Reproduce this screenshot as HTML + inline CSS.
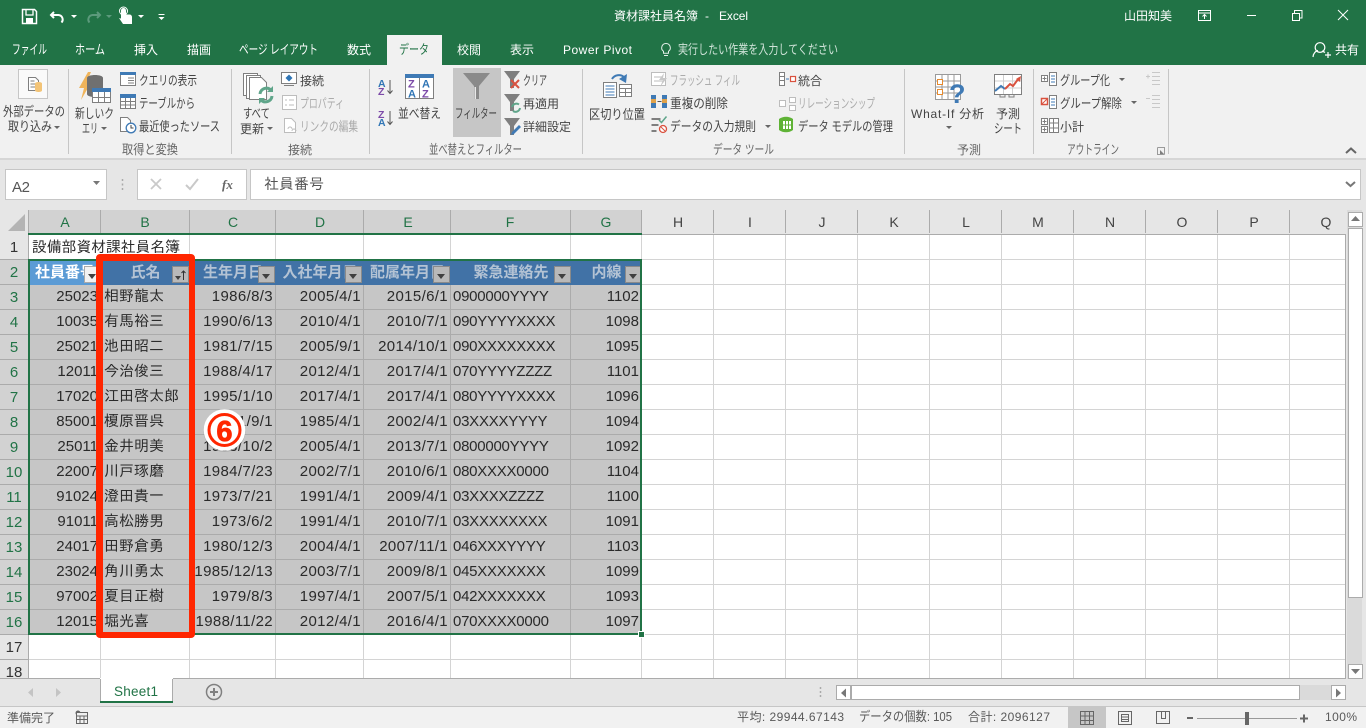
<!DOCTYPE html>
<html lang="ja"><head><meta charset="utf-8"><title>資材課社員名簿 - Excel</title>
<style>
html,body{margin:0;padding:0;width:1366px;height:728px;overflow:hidden;background:#e6e6e6}
body{position:relative;font-family:"Liberation Sans","Noto Sans CJK JP",sans-serif}
svg{position:absolute;left:0;top:0}
svg text{font-family:"Liberation Sans","Noto Sans CJK JP",sans-serif;font-size:12px;fill:#444}
svg text[lengthAdjust="spacingAndGlyphs"]{font-size:13px}
.w text{fill:#fff}
.g text{fill:#ababab}
.l text{fill:#666}
.s text{fill:#595959}
.ch text{font-size:14px;text-anchor:middle;fill:#217346}
.ch .n{fill:#444}
.rh text{font-size:15px;text-anchor:middle;fill:#217346}
.rh .n{fill:#333}
#sel{position:absolute;left:30px;top:261px;width:610px;height:372px;overflow:hidden;background:#c6c6c6}
#sel table{position:absolute;left:-1px;top:-1px;border-collapse:separate;border-spacing:0;table-layout:fixed;width:613px;font-family:"Liberation Sans","IPAGothic","Noto Sans CJK JP",sans-serif}
#sel td{box-sizing:border-box;height:25px;padding:0 2px;font-size:15px;line-height:24px;color:#2a2a2a;white-space:nowrap;overflow:hidden;text-align:right;border-right:1px solid #ababab;border-bottom:1px solid #ababab;background:#c6c6c6}
#sel td.j{text-align:left;padding-left:3px}
#sel td.d{letter-spacing:.35px}
#sel td.f{text-align:left;padding-left:2px;letter-spacing:-.25px}
#sel tr.h td{background:#4172a6;color:#b4c3d4;font-weight:bold;text-align:center;border:0;padding:0;overflow:hidden;font-family:"Liberation Sans","Noto Sans CJK JP",sans-serif}
#sel tr.h td.a{background:#5b9bd5;color:#fff}
.btn{position:absolute;top:266px;width:17px;height:17px;box-sizing:border-box;background:#b9b9b9;border:1px solid #8a8a8a}
.btn:after{content:"";position:absolute;left:3px;top:7px;border:4.5px solid transparent;border-top:5px solid #404040;border-bottom:0}
.btn.so:after{left:2px;top:9px;border-width:3.5px;border-top-width:4px;border-bottom:0}
#box{position:absolute;left:28px;top:259px;width:614px;height:376px;box-sizing:border-box;border:2px solid #217346;pointer-events:none}
#hd{position:absolute;left:639px;top:632px;width:5px;height:5px;background:#217346;outline:1px solid #fff}
#red{position:absolute;left:96px;top:254px;width:99px;height:384px;box-sizing:border-box;border:solid #ff2600;border-width:7px 6px 6px 7px;border-radius:4px}
</style></head><body>
<svg width="1366" height="728" viewBox="0 0 1366 728">
<!-- backgrounds -->
<g shape-rendering="crispEdges">
<rect width="1366" height="65" fill="#217346"/>
<rect x="387" y="35" width="55" height="30" fill="#f1f1f1"/>
<rect y="65" width="1366" height="93" fill="#f1f1f1"/>
<rect y="158" width="1366" height="2" fill="#d6d6d6"/>
<rect y="160" width="1366" height="50" fill="#e6e6e6"/>
<rect x="5.5" y="169.5" width="101" height="30" fill="#fff" stroke="#c6c6c6"/>
<rect x="137.5" y="169.5" width="109" height="30" fill="#fff" stroke="#c6c6c6"/>
<rect x="250.5" y="169.5" width="1110" height="30" fill="#fff" stroke="#c6c6c6"/>
<rect x="453" y="68" width="48" height="69" fill="#c6c6c6"/>
<!-- ribbon separators -->
<g fill="#c6c6c6"><rect x="68" y="69" width="1" height="85"/><rect x="231" y="69" width="1" height="85"/><rect x="369" y="69" width="1" height="85"/><rect x="582" y="69" width="1" height="85"/><rect x="904" y="69" width="1" height="85"/><rect x="1033" y="69" width="1" height="85"/><rect x="1168" y="69" width="1" height="85"/></g>
<!-- grid -->
<rect x="29" y="235" width="1316" height="443" fill="#fff"/>
<rect x="0" y="210" width="28" height="24" fill="#e6e6e6"/>
<rect x="29" y="210" width="613" height="23" fill="#d2d2d2"/>
<rect x="0" y="235" width="28" height="25" fill="#e6e6e6"/>
<rect x="0" y="260" width="28" height="375" fill="#d2d2d2"/>
<rect x="0" y="635" width="28" height="44" fill="#e6e6e6"/>
<g fill="#d4d4d4">
<rect x="29" y="259" width="1316" height="1"/><rect x="29" y="284" width="1316" height="1"/><rect x="29" y="309" width="1316" height="1"/><rect x="29" y="334" width="1316" height="1"/><rect x="29" y="359" width="1316" height="1"/><rect x="29" y="384" width="1316" height="1"/><rect x="29" y="409" width="1316" height="1"/><rect x="29" y="434" width="1316" height="1"/><rect x="29" y="459" width="1316" height="1"/><rect x="29" y="484" width="1316" height="1"/><rect x="29" y="509" width="1316" height="1"/><rect x="29" y="534" width="1316" height="1"/><rect x="29" y="559" width="1316" height="1"/><rect x="29" y="584" width="1316" height="1"/><rect x="29" y="609" width="1316" height="1"/><rect x="29" y="634" width="1316" height="1"/><rect x="29" y="659" width="1316" height="1"/>
<rect x="189" y="235" width="1" height="443"/><rect x="275" y="235" width="1" height="443"/><rect x="363" y="235" width="1" height="443"/><rect x="450" y="235" width="1" height="443"/><rect x="570" y="235" width="1" height="443"/><rect x="641" y="235" width="1" height="443"/><rect x="713" y="235" width="1" height="443"/><rect x="785" y="235" width="1" height="443"/><rect x="857" y="235" width="1" height="443"/><rect x="929" y="235" width="1" height="443"/><rect x="1001" y="235" width="1" height="443"/><rect x="1073" y="235" width="1" height="443"/><rect x="1145" y="235" width="1" height="443"/><rect x="1217" y="235" width="1" height="443"/><rect x="1289" y="235" width="1" height="443"/>
<rect x="100" y="635" width="1" height="43"/>
</g>
<g fill="#ababab">
<rect x="100" y="210" width="1" height="23"/><rect x="189" y="210" width="1" height="23"/><rect x="275" y="210" width="1" height="23"/><rect x="363" y="210" width="1" height="23"/><rect x="450" y="210" width="1" height="23"/><rect x="570" y="210" width="1" height="23"/><rect x="641" y="210" width="1" height="23"/><rect x="713" y="210" width="1" height="23"/><rect x="785" y="210" width="1" height="23"/><rect x="857" y="210" width="1" height="23"/><rect x="929" y="210" width="1" height="23"/><rect x="1001" y="210" width="1" height="23"/><rect x="1073" y="210" width="1" height="23"/><rect x="1145" y="210" width="1" height="23"/><rect x="1217" y="210" width="1" height="23"/><rect x="1289" y="210" width="1" height="23"/>
<rect x="28" y="210" width="1" height="469"/><rect x="642" y="234" width="703" height="1"/><rect x="1345" y="234" width="1" height="445"/>
<rect x="0" y="259" width="28" height="1"/><rect x="0" y="284" width="28" height="1"/><rect x="0" y="309" width="28" height="1"/><rect x="0" y="334" width="28" height="1"/><rect x="0" y="359" width="28" height="1"/><rect x="0" y="384" width="28" height="1"/><rect x="0" y="409" width="28" height="1"/><rect x="0" y="434" width="28" height="1"/><rect x="0" y="459" width="28" height="1"/><rect x="0" y="484" width="28" height="1"/><rect x="0" y="509" width="28" height="1"/><rect x="0" y="534" width="28" height="1"/><rect x="0" y="559" width="28" height="1"/><rect x="0" y="584" width="28" height="1"/><rect x="0" y="609" width="28" height="1"/><rect x="0" y="634" width="28" height="1"/><rect x="0" y="659" width="28" height="1"/>
<rect x="0" y="678" width="1346" height="1"/>
</g>
<rect x="28" y="233" width="614" height="2" fill="#217346"/>
<rect x="28" y="260" width="1" height="375" fill="#217346"/>
<!-- tab bar & status -->
<rect x="0" y="679" width="1366" height="27" fill="#e6e6e6"/>
<rect x="0" y="706" width="1366" height="1" fill="#c6c6c6"/>
<rect x="0" y="707" width="1366" height="21" fill="#f1f1f1"/>
<rect x="100" y="679" width="73" height="24" fill="#fff"/>
<rect x="100" y="678" width="1" height="25" fill="#ababab"/><rect x="172" y="678" width="1" height="25" fill="#ababab"/>
<rect x="100" y="678" width="73" height="1" fill="#fff"/>
<rect x="100" y="701" width="73" height="2" fill="#217346"/>
<rect x="1068" y="707" width="38" height="21" fill="#c6c6c6"/>
<!-- scrollbars -->
<rect x="1347" y="210" width="15" height="469" fill="#dadada"/>
<rect x="1348.5" y="212.5" width="14" height="14" fill="#fff" stroke="#ababab"/>
<rect x="1348.5" y="228.5" width="14" height="369" fill="#fff" stroke="#ababab"/>
<rect x="1348.5" y="664.5" width="14" height="14" fill="#fff" stroke="#ababab"/>
<rect x="836" y="685" width="510" height="15" fill="#dadada"/>
<rect x="836.5" y="685.5" width="14" height="14" fill="#fff" stroke="#ababab"/>
<rect x="851.5" y="685.5" width="448" height="14" fill="#fff" stroke="#ababab"/>
<rect x="1331.5" y="685.5" width="14" height="14" fill="#fff" stroke="#ababab"/>
</g>
<g fill="#777">
<path d="M1355.5 216l4.500 5h-9z"/><path d="M1355.5 674l-4.500-5h9z"/><path d="M841 693l5-4.500v9z"/><path d="M1341 693l-5-4.500v9z"/>
</g>

<!-- Title bar text -->
<g class="w">
<text x="614" y="20" textLength="84" lengthAdjust="spacing">資材課社員名簿</text>
<text x="705" y="20">-</text>
<text x="719" y="20" textLength="29">Excel</text>
<text x="1124" y="20" textLength="48">山田知美</text>
<text x="12" y="54" textLength="35" lengthAdjust="spacingAndGlyphs">ファイル</text>
<text x="75" y="54" textLength="30" lengthAdjust="spacingAndGlyphs">ホーム</text>
<text x="134" y="54">挿入</text>
<text x="187" y="54">描画</text>
<text x="239" y="54" textLength="79" lengthAdjust="spacingAndGlyphs">ページ レイアウト</text>
<text x="347" y="54">数式</text>
<text x="457" y="54">校閲</text>
<text x="510" y="54">表示</text>
<text x="563" y="54" textLength="69">Power Pivot</text>
<text x="678" y="54" textLength="160" lengthAdjust="spacingAndGlyphs" style="fill:#cfe3d8">実行したい作業を入力してください</text>
<text x="1335" y="54">共有</text>
</g>
<text x="399" y="54" textLength="30" lengthAdjust="spacingAndGlyphs" style="fill:#217346">データ</text>

<!-- QAT icons -->
<g fill="none" stroke="#fff">
<path d="M22.500 9.500h12l2 2v12h-14z" stroke-width="1.500"/>
<path d="M26 10v5h7v-5" stroke-width="1.300"/>
<rect x="26" y="18" width="7" height="5" fill="#fff" stroke="none"/>
<path d="M54 12l-3 3 3 3M51.500 15h7a4.500 4.500 0 0 1 3 7.500" stroke-width="2"/>
<path d="M97 12l3 3-3 3M99.500 15h-7a4.500 4.500 0 0 0-3 7.500" stroke-width="2" stroke="#5c9a7c"/>
<path d="M1198.500 10.500h12v10h-12zM1198.500 13h12M1204.500 19v-4M1202.500 16.500l2-2 2 2" stroke-width="1"/>
<path d="M1247 15.500h9" stroke-width="1"/>
<path d="M1292.500 13.500h7v7h-7zM1294.500 13v-2.500h7.500v7.500h-2.500" stroke-width="1"/>
<path d="M1338 10l10 10M1348 10l-10 10" stroke-width="1"/>
<circle cx="1320" cy="47.500" r="4.800" stroke-width="1.200"/><path d="M1313 57c.5-4.500 3-6 5-6.500M1322 51c1 .3 2 .8 3 1.500M1325 55h6M1328 52v6" stroke-width="1.200"/>
<path d="M666 43.500a4.300 4.300 0 0 1 2.500 7.800v2h-5v-2a4.300 4.300 0 0 1 2.500-7.800zM664 55.500h4" stroke-width="1" stroke="#e3efe8"/>
</g>
<g fill="#fff">
<path d="M121 10.500a2.500 2.500 0 0 1 5 0v4h3.500a2.500 2.500 0 0 1 2.500 2.500v7h-9l-4-6 2 .5z"/>
<path d="M71 15h6l-3 3zM138 15h6l-3 3zM158.500 14h6v1h-6zM158.500 17h6l-3 3z"/>
</g>
<path d="M106 15h6l-3 3z" fill="#5c9a7c"/>
<circle cx="123.500" cy="11" r="4" fill="none" stroke="#fff" stroke-width="1"/>

<!-- Ribbon text -->
<g>
<text x="3" y="116" textLength="62" lengthAdjust="spacingAndGlyphs">外部データの</text>
<text x="8" y="131" textLength="44" lengthAdjust="spacingAndGlyphs">取り込み</text>
<text x="75" y="118" textLength="39" lengthAdjust="spacingAndGlyphs">新しいク</text>
<text x="82" y="133" textLength="16" lengthAdjust="spacingAndGlyphs">エリ</text>
<text x="139" y="85" textLength="58" lengthAdjust="spacingAndGlyphs">クエリの表示</text>
<text x="139" y="108" textLength="56" lengthAdjust="spacingAndGlyphs">テーブルから</text>
<text x="139" y="131" textLength="81" lengthAdjust="spacingAndGlyphs">最近使ったソース</text>
<text x="243" y="118" textLength="27" lengthAdjust="spacingAndGlyphs">すべて</text>
<text x="240" y="133" textLength="24">更新</text>
<text x="300" y="85">接続</text>
<text x="398" y="118" textLength="43" lengthAdjust="spacingAndGlyphs">並べ替え</text>
<text x="455" y="118" textLength="42" lengthAdjust="spacingAndGlyphs">フィルター</text>
<text x="523" y="85" textLength="24" lengthAdjust="spacingAndGlyphs">クリア</text>
<text x="523" y="108" textLength="36">再適用</text>
<text x="523" y="131" textLength="48">詳細設定</text>
<text x="589" y="119" textLength="56" lengthAdjust="spacingAndGlyphs">区切り位置</text>
<text x="670" y="108" textLength="58" lengthAdjust="spacingAndGlyphs">重複の削除</text>
<text x="670" y="131" textLength="86" lengthAdjust="spacingAndGlyphs">データの入力規則</text>
<text x="798" y="85">統合</text>
<text x="798" y="131" textLength="95" lengthAdjust="spacingAndGlyphs">データ モデルの管理</text>
<text x="911" y="118" textLength="73">What-If 分析</text>
<text x="996" y="118">予測</text>
<text x="994" y="133" textLength="28" lengthAdjust="spacingAndGlyphs">シート</text>
<text x="1060" y="85" textLength="50" lengthAdjust="spacingAndGlyphs">グループ化</text>
<text x="1060" y="108" textLength="62" lengthAdjust="spacingAndGlyphs">グループ解除</text>
<text x="1060" y="131">小計</text>
</g>
<g class="g">
<text x="300" y="108" textLength="44" lengthAdjust="spacingAndGlyphs">プロパティ</text>
<text x="300" y="131" textLength="58" lengthAdjust="spacingAndGlyphs">リンクの編集</text>
<text x="670" y="85" textLength="70" lengthAdjust="spacingAndGlyphs">フラッシュ フィル</text>
<text x="798" y="108" textLength="77" lengthAdjust="spacingAndGlyphs">リレーションシップ</text>
</g>
<g class="l">
<text x="122" y="154" textLength="56" lengthAdjust="spacingAndGlyphs">取得と変換</text>
<text x="288" y="154">接続</text>
<text x="429" y="154" textLength="93" lengthAdjust="spacingAndGlyphs">並べ替えとフィルター</text>
<text x="713" y="154" textLength="61" lengthAdjust="spacingAndGlyphs">データ ツール</text>
<text x="957" y="154">予測</text>
<text x="1067" y="154" textLength="52" lengthAdjust="spacingAndGlyphs">アウトライン</text>
</g>
<g fill="#666">
<path d="M54 126h6l-3 3zM101 127h6l-3 3zM267 127h6l-3 3zM765 125h6l-3 3zM946 126h6l-3 3zM1119 78h6l-3 3zM1131 101h6l-3 3z"/>
</g>

<!-- Ribbon icons -->
<g>
<rect x="18.500" y="69.500" width="29" height="29" fill="#fafafa" stroke="#c6c6c6"/>
<path d="M28.500 77.500h7l3 3v10h-10z" fill="#fff" stroke="#7f7f7f"/>
<path d="M30.500 81h4M30.500 84h5M30.500 87h5" stroke="#7f7f7f"/>
<path d="M35 83.500c0-2 7-2 7 0v7c0 2-7 2-7 0z" fill="#f3c477"/>

<path d="M88 72l-9 16h5l-3 12 11-19h-5l4-9z" fill="#f0b45a"/>
<path d="M87 78c0-4 16-4 16 0v16c0 4-16 4-16 0z" fill="#707070"/>
<rect x="92.500" y="88.500" width="18" height="14" fill="#fff" stroke="#7f7f7f"/>
<rect x="92" y="88" width="19" height="4" fill="#3f7ab5"/>
<path d="M98.500 92v10M104.500 92v10M93 97.500h17" stroke="#7f7f7f"/>

<rect x="120.500" y="72.500" width="15" height="13" fill="#fff" stroke="#7f7f7f"/><rect x="120" y="72" width="16" height="3" fill="#3f7ab5"/>
<path d="M128 78h6M128 80.500h6M128 83h6" stroke="#7f7f7f"/>
<rect x="120.500" y="94.500" width="15" height="14" fill="#fff" stroke="#7f7f7f"/><rect x="120" y="94" width="16" height="4" fill="#3f7ab5"/>
<path d="M125.500 98v10M130.500 98v10M121 101.500h14M121 105h14" stroke="#7f7f7f"/>
<path d="M120.500 117.500h7l3 3v11h-10z" fill="#fff" stroke="#7f7f7f"/>
<circle cx="131" cy="128" r="4.800" fill="#fff" stroke="#3f7ab5" stroke-width="1.300"/><path d="M131 125v3h2.500" stroke="#444" fill="none"/>

<path d="M243.500 73.500h14v22h-14z" fill="#fff" stroke="#7f7f7f"/><path d="M246.500 75.500h14v23h-14z" fill="#fff" stroke="#7f7f7f"/>
<path d="M249.500 77.500h12l5 5v17h-17z" fill="#fff" stroke="#7f7f7f"/>
<path d="M260 94a6.500 6.500 0 0 1 11-4M272 96a6.500 6.500 0 0 1-11 4" fill="none" stroke="#5fa58a" stroke-width="3"/>
<path d="M273 86v6h-6zM259 104v-6h6z" fill="#5fa58a"/>

<rect x="281.500" y="72.500" width="15" height="11" fill="#fff" stroke="#7f7f7f"/><path d="M284 85.500h10" stroke="#7f7f7f"/><path d="M289 74.500l3.500 3.500-3.500 3.500-3.500-3.500z" fill="#2f75b5"/>
<rect x="282.500" y="95.500" width="14" height="14" fill="#fff" stroke="#bdbdbd"/><path d="M285 100h2M285 105h2M289 100h5M289 105h5" stroke="#bdbdbd"/>
<path d="M284.500 118.500h7l4 4v10h-11z" fill="#fff" stroke="#bdbdbd"/><path d="M288 129a2 2 0 0 1 4 0M292 131a2 2 0 0 1 4 0" stroke="#bdbdbd" fill="none"/>

<text x="378" y="87" style="font-size:10.500px;font-weight:bold;fill:#2f75b5">A</text><text x="378" y="95" style="font-size:10.500px;font-weight:bold;fill:#7c4aa8">Z</text>
<path d="M390 80v13M387.500 90.500l2.500 3 2.500-3" stroke="#555" fill="none"/>
<text x="378" y="118" style="font-size:10.500px;font-weight:bold;fill:#7c4aa8">Z</text><text x="378" y="126" style="font-size:10.500px;font-weight:bold;fill:#2f75b5">A</text>
<path d="M390 111v13M387.500 121.500l2.500 3 2.500-3" stroke="#555" fill="none"/>
<rect x="405.500" y="74.500" width="28" height="24" fill="#fff" stroke="#7f7f7f"/><rect x="405" y="74" width="29" height="4" fill="#3f7ab5"/><path d="M419.500 78v20" stroke="#7f7f7f"/>
<text x="408" y="87.500" style="font-size:11px;font-weight:bold;fill:#7c4aa8">Z</text><text x="408" y="97.500" style="font-size:11px;font-weight:bold;fill:#2f75b5">A</text>
<text x="422" y="87.500" style="font-size:11px;font-weight:bold;fill:#2f75b5">A</text><text x="422" y="97.500" style="font-size:11px;font-weight:bold;fill:#7c4aa8">Z</text>

<path d="M463 73h27l-11 13v13h-5V86z" fill="#8a8a8a"/><path d="M474.500 87h1.500v12h-1.500z" fill="#e8e8e8"/>
<path d="M504 71h16l-6 8v9h-4v-9z" fill="#7f7f7f"/><path d="M511 80l8 8M519 80l-8 8" stroke="#d9523f" stroke-width="2"/>
<path d="M504 94h16l-6 8v9h-4v-9z" fill="#7f7f7f"/><path d="M512 107a4.500 4.500 0 0 1 7-2.500M520 108a4.500 4.500 0 0 1-7 3" fill="none" stroke="#5fa58a" stroke-width="2"/>
<path d="M504 118h16l-6 8v9h-4v-9z" fill="#7f7f7f"/><path d="M512 132l7-7 2 2-7 7-3 1z" fill="#3f7ab5"/>

<path d="M603.500 82.500h13v15h-13z" fill="#fff" stroke="#7f7f7f"/><path d="M605.500 86h9M605.500 89h9M605.500 92h9M605.500 95h9" stroke="#3f7ab5"/>
<rect x="619.500" y="84.500" width="12" height="12" fill="#fff" stroke="#7f7f7f"/><path d="M619 88.500h13M625.500 88v9M620 92.500h11" stroke="#7f7f7f"/>
<path d="M612 79a8 8 0 0 1 12-2" fill="none" stroke="#3f7ab5" stroke-width="2"/><path d="M627 74l-1 9-7-4z" fill="#3f7ab5"/>

<rect x="651.500" y="72.500" width="14" height="13" fill="#fff" stroke="#bdbdbd"/><path d="M654 77h9M654 81h9" stroke="#bdbdbd"/><path d="M664 73l-5 7h4l-3 7 7-9h-4z" fill="#c8c8c8"/>
<rect x="651" y="95" width="5" height="13" fill="#3f7ab5"/><rect x="651" y="99" width="5" height="4" fill="#e0a24a"/><rect x="662" y="95" width="5" height="13" fill="#3f7ab5"/><rect x="662" y="99" width="5" height="4" fill="#e0a24a"/><path d="M657.500 101.500h4" stroke="#555"/>
<path d="M651.500 119h9M651.500 125h7M651.500 131h5" stroke="#7f7f7f" stroke-width="2"/><path d="M659 120l2.500 2.500 5-6" fill="none" stroke="#5fa58a" stroke-width="1.500"/><circle cx="663" cy="129" r="3.500" fill="#fff" stroke="#d9523f" stroke-width="1.300"/><path d="M661 127l4 4" stroke="#d9523f"/>

<rect x="779.500" y="72.500" width="5" height="13" fill="#fff" stroke="#7f7f7f"/><path d="M780 76.500h4M780 80.500h4" stroke="#7f7f7f"/><rect x="790.500" y="76.500" width="5" height="5" fill="#fff" stroke="#d9523f" stroke-width="1.200"/><path d="M786 79h3" stroke="#3f7ab5"/>
<rect x="779.500" y="100.500" width="6" height="6" fill="#fff" stroke="#bdbdbd"/><rect x="789.500" y="97.500" width="6" height="5" fill="#fff" stroke="#bdbdbd"/><rect x="789.500" y="105.500" width="6" height="5" fill="#fff" stroke="#bdbdbd"/>
<path d="M779 119c4-3 10-3 14 0v11c-4 3-10 3-14 0z" fill="#5fb336"/><path d="M783 121h8v8h-8z" fill="#fff"/><path d="M785.500 121v8M788.500 121v8M783 125h8" stroke="#5fb336"/>

<g fill="none" stroke="#9a9a9a"><rect x="935.500" y="74.500" width="25" height="25" fill="#fff"/><path d="M942 75v24M948 75v24M954 75v24M936 81h24M936 87h24M936 93h24"/></g>
<rect x="937.500" y="79.500" width="5" height="5" fill="#fff" stroke="#e68a2e"/><rect x="937.500" y="89.500" width="5" height="5" fill="#fff" stroke="#e68a2e"/>
<text x="949" y="103" style="font-size:27px;font-weight:bold;fill:#3f7ab5;font-family:'Liberation Sans',sans-serif">?</text>

<rect x="994.500" y="74.500" width="27" height="20" fill="#fff" stroke="#7f7f7f"/><path d="M1003.500 75v19M1012.500 75v19M995 81h26M995 88h26" stroke="#cfcfcf"/>
<path d="M995 91l6-5 4 3" fill="none" stroke="#3f7ab5" stroke-width="2"/><path d="M1005 89l5-5 3 2 6-8" fill="none" stroke="#d9523f" stroke-width="2"/><path d="M1021 76l-1 6-4-3z" fill="#d9523f"/>
<path d="M1000 95v2h5v-2M1009 95v2h5v-2" stroke="#7f7f7f" fill="none"/>

<g fill="#fff" stroke="#7f7f7f">
<rect x="1041.500" y="75.500" width="6" height="6"/><rect x="1049.500" y="72.500" width="7" height="13"/>
<rect x="1049.500" y="95.500" width="7" height="13"/>
<rect x="1041.500" y="118.500" width="6" height="6"/><rect x="1041.500" y="126.500" width="6" height="6"/><rect x="1049.500" y="118.500" width="9" height="14"/>
</g>
<path d="M1042.500 78.500h4M1044.500 76.500v4M1042.500 121.500h4M1044.500 119.500v4M1042.500 129.500h4M1044.500 127.500v4M1049 123h9M1049 128h9M1053.500 119v13" stroke="#7f7f7f"/>
<path d="M1051 76h4M1051 79h4M1051 82h4M1051 99h4M1051 102h4M1051 105h4" stroke="#3f7ab5"/>
<rect x="1041.500" y="98.500" width="6" height="6" fill="#fff" stroke="#d9523f" stroke-width="1.500"/><path d="M1042 104l5-5" stroke="#d9523f"/>
<path d="M1152 72.500h8M1152 76.500h8M1152 80.500h8M1152 84.500h8M1146 76.500h4M1148 74.500v4M1152 95.500h8M1152 99.500h8M1152 103.500h8M1152 107.500h8M1146 98.500h4" stroke="#c8c8c8"/>
<path d="M1157.500 147.500h7v7M1157.500 147.500v7h7" fill="none" stroke="#9a9a9a"/><path d="M1164 154l-4-4v4z" fill="#7f7f7f"/>
<path d="M1346 153l5-4.500 5 4.500" fill="none" stroke="#666" stroke-width="2"/>
</g>

<!-- Formula bar -->
<text x="12" y="192" textLength="18" style="font-size:15px;fill:#555">A2</text>
<path d="M93 181h7l-3.500 4z" fill="#777"/>
<path d="M122.500 179v2M122.500 183.500v2M122.500 188v2" stroke="#aaa" stroke-width="1.500"/>
<path d="M151 179l10 10M161 179l-10 10" stroke="#c9c9c9" stroke-width="1.800"/>
<path d="M186 185l4 4 8-10" fill="none" stroke="#c9c9c9" stroke-width="2"/>
<text x="222" y="189" style="font-family:'Liberation Serif',serif;font-style:italic;font-size:13px;font-weight:bold;fill:#666">fx</text>
<text x="264" y="189" style="font-size:15px;fill:#555;font-family:'Liberation Sans','IPAGothic','Noto Sans CJK JP',sans-serif">社員番号</text>
<path d="M1346 182l4.500 4 4.500-4" fill="none" stroke="#777" stroke-width="2"/>

<!-- Column letters -->
<g class="ch">
<text x="65" y="227">A</text><text x="145" y="227">B</text><text x="233" y="227">C</text><text x="320" y="227">D</text><text x="408" y="227">E</text><text x="510" y="227">F</text><text x="606" y="227">G</text>
<text class="n" x="678" y="227">H</text><text class="n" x="750" y="227">I</text><text class="n" x="822" y="227">J</text><text class="n" x="894" y="227">K</text><text class="n" x="966" y="227">L</text><text class="n" x="1038" y="227">M</text><text class="n" x="1110" y="227">N</text><text class="n" x="1182" y="227">O</text><text class="n" x="1254" y="227">P</text><text class="n" x="1326" y="227">Q</text>
</g>
<path d="M25 214v17H8z" fill="#b4b4b4"/>
<!-- Row numbers -->
<g class="rh">
<text class="n" x="14" y="252">1</text><text x="14" y="277">2</text><text x="14" y="302">3</text><text x="14" y="327">4</text><text x="14" y="352">5</text><text x="14" y="377">6</text><text x="14" y="402">7</text><text x="14" y="427">8</text><text x="14" y="452">9</text><text x="14" y="477">10</text><text x="14" y="502">11</text><text x="14" y="527">12</text><text x="14" y="552">13</text><text x="14" y="577">14</text><text x="14" y="602">15</text><text x="14" y="627">16</text><text class="n" x="14" y="652">17</text><text class="n" x="14" y="677">18</text>
</g>
<text x="32" y="252" textLength="148" style="font-size:15px;fill:#2a2a2a;font-family:'Liberation Sans','IPAGothic','Noto Sans CJK JP',sans-serif">設備部資材課社員名簿</text>

<!-- Bottom -->
<path d="M33 688l-5 4.500 5 4.500zM56 688l5 4.500-5 4.500z" fill="#c4c4c4"/>
<text x="114" y="696" textLength="44" style="font-size:13.500px;fill:#217346">Sheet1</text>
<circle cx="214" cy="692" r="7.500" fill="none" stroke="#808080" stroke-width="1.500"/><path d="M210 692h8M214 688v8" stroke="#808080" stroke-width="2"/>
<path d="M820.500 687v2M820.500 691v2M820.500 695v2" stroke="#aaa" stroke-width="1.500"/>
<g class="s">
<text x="7" y="722" textLength="48">準備完了</text>
<text x="737" y="721" textLength="107">平均: 29944.67143</text>
<text x="859" y="721" textLength="93" lengthAdjust="spacingAndGlyphs">データの個数: 105</text>
<text x="968" y="721" textLength="82">合計: 2096127</text>
<text x="1325" y="721" textLength="32">100%</text>
</g>
<g fill="none" stroke="#666">
<circle cx="78" cy="713" r="2.500" fill="#666" stroke="none"/>
<rect x="76.500" y="712.500" width="11" height="11" fill="#f1f1f1"/><path d="M76 716h12M76 719.500h12M80 716v8M84 716v8"/>
<rect x="1080.500" y="711.500" width="13" height="13"/><path d="M1085 712v12M1089.500 712v12M1081 716h12M1081 720.500h12"/>
<rect x="1118.500" y="711.500" width="13" height="13"/><rect x="1121.500" y="714.500" width="7" height="7"/><path d="M1122 717h6M1122 719.500h6"/>
<path d="M1156.500 711.500h13v12h-13zM1161.500 712v6.500h4V712"/>
<path d="M1197 718.500h100" stroke="#999"/>
</g>
<path d="M1187 717h6v2h-6zM1300 717.500h3v-3h2v3h3v2h-3v3h-2v-3h-3z" fill="#666"/>
<rect x="1245" y="712" width="4" height="13" fill="#666"/>
</svg>

<div id="sel"><table>
<colgroup><col style="width:72px"><col style="width:89px"><col style="width:86px"><col style="width:88px"><col style="width:87px"><col style="width:120px"><col style="width:71px"></colgroup>
<tr class="h"><td class="a">社員番号</td><td>氏名</td><td>生年月日</td><td>入社年月日</td><td>配属年月日</td><td>緊急連絡先</td><td>内線</td></tr>
<tr><td>25023</td><td class="j">相野龍太</td><td class="d">1986/8/3</td><td class="d">2005/4/1</td><td class="d">2015/6/1</td><td class="f">0900000YYYY</td><td>1102</td></tr>
<tr><td>10035</td><td class="j">有馬裕三</td><td class="d">1990/6/13</td><td class="d">2010/4/1</td><td class="d">2010/7/1</td><td class="f">090YYYYXXXX</td><td>1098</td></tr>
<tr><td>25021</td><td class="j">池田昭二</td><td class="d">1981/7/15</td><td class="d">2005/9/1</td><td class="d">2014/10/1</td><td class="f">090XXXXXXXX</td><td>1095</td></tr>
<tr><td>12011</td><td class="j">今治俊三</td><td class="d">1988/4/17</td><td class="d">2012/4/1</td><td class="d">2017/4/1</td><td class="f">070YYYYZZZZ</td><td>1101</td></tr>
<tr><td>17020</td><td class="j">江田啓太郎</td><td class="d">1995/1/10</td><td class="d">2017/4/1</td><td class="d">2017/4/1</td><td class="f">080YYYYXXXX</td><td>1096</td></tr>
<tr><td>85001</td><td class="j">榎原晋呉</td><td class="d">1961/9/1</td><td class="d">1985/4/1</td><td class="d">2002/4/1</td><td class="f">03XXXXYYYY</td><td>1094</td></tr>
<tr><td>25011</td><td class="j">金井明美</td><td class="d">1983/10/2</td><td class="d">2005/4/1</td><td class="d">2013/7/1</td><td class="f">0800000YYYY</td><td>1092</td></tr>
<tr><td>22007</td><td class="j">川戸琢磨</td><td class="d">1984/7/23</td><td class="d">2002/7/1</td><td class="d">2010/6/1</td><td class="f">080XXXX0000</td><td>1104</td></tr>
<tr><td>91024</td><td class="j">澄田貴一</td><td class="d">1973/7/21</td><td class="d">1991/4/1</td><td class="d">2009/4/1</td><td class="f">03XXXXZZZZ</td><td>1100</td></tr>
<tr><td>91011</td><td class="j">高松勝男</td><td class="d">1973/6/2</td><td class="d">1991/4/1</td><td class="d">2010/7/1</td><td class="f">03XXXXXXXX</td><td>1091</td></tr>
<tr><td>24017</td><td class="j">田野倉勇</td><td class="d">1980/12/3</td><td class="d">2004/4/1</td><td class="d">2007/11/1</td><td class="f">046XXXYYYY</td><td>1103</td></tr>
<tr><td>23024</td><td class="j">角川勇太</td><td class="d">1985/12/13</td><td class="d">2003/7/1</td><td class="d">2009/8/1</td><td class="f">045XXXXXXX</td><td>1099</td></tr>
<tr><td>97002</td><td class="j">夏目正樹</td><td class="d">1979/8/3</td><td class="d">1997/4/1</td><td class="d">2007/5/1</td><td class="f">042XXXXXXX</td><td>1093</td></tr>
<tr><td>12015</td><td class="j">堀光喜</td><td class="d">1988/11/22</td><td class="d">2012/4/1</td><td class="d">2016/4/1</td><td class="f">070XXXX0000</td><td>1097</td></tr>
</table></div>

<div class="btn" style="left:84px;background:#f2f2f2;border-color:#aaa"></div>
<div class="btn" style="left:258px"></div>
<div class="btn" style="left:345px"></div>
<div class="btn" style="left:433px"></div>
<div class="btn" style="left:554px"></div>
<div class="btn" style="left:625px"></div>
<div id="box"></div><div id="hd"></div>
<div id="red"></div>
<div class="btn so" style="left:172px"></div>
<svg width="1366" height="728" viewBox="0 0 1366 728" style="pointer-events:none">
<path d="M183.500 271v9M181.500 273l2-2 2 2" stroke="#333" fill="none"/>
<circle cx="224.500" cy="431" r="21" fill="#000" opacity=".12"/>
<circle cx="224.500" cy="430" r="20.800" fill="#fff"/>
<circle cx="224.500" cy="430" r="15.500" fill="#fff" stroke="#ff2600" stroke-width="3"/>
<text x="224.500" y="441" text-anchor="middle" style="font-family:'Liberation Sans',sans-serif;font-size:29px;font-weight:bold;fill:#ff2600;stroke:#ff2600;stroke-width:.8px">6</text>
</svg>
</body></html>
